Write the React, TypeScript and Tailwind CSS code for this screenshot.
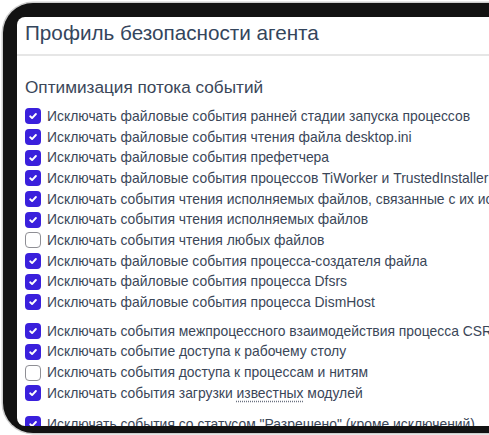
import React from 'react';

interface Option {
  label: React.ReactNode;
  checked: boolean;
}

const groups: Option[][] = [
  [
    { label: 'Исключать файловые события ранней стадии запуска процессов', checked: true },
    { label: 'Исключать файловые события чтения файла desktop.ini', checked: true },
    { label: 'Исключать файловые события префетчера', checked: true },
    { label: 'Исключать файловые события процессов TiWorker и TrustedInstaller', checked: true },
    { label: 'Исключать события чтения исполняемых файлов, связанные с их исполнением', checked: true },
    { label: 'Исключать события чтения исполняемых файлов', checked: true },
    { label: 'Исключать события чтения любых файлов', checked: false },
    { label: 'Исключать файловые события процесса-создателя файла', checked: true },
    { label: 'Исключать файловые события процесса Dfsrs', checked: true },
    { label: 'Исключать файловые события процесса DismHost', checked: true },
  ],
  [
    { label: 'Исключать события межпроцессного взаимодействия процесса CSRSS', checked: true },
    { label: 'Исключать событие доступа к рабочему столу', checked: true },
    { label: 'Исключать события доступа к процессам и нитям', checked: false },
    {
      label: (
        <>
          Исключать события загрузки{' '}
          <span className="underline decoration-dotted decoration-[#6b7280] underline-offset-[3px]">известных</span>{' '}
          модулей
        </>
      ),
      checked: true,
    },
  ],
  [{ label: 'Исключать события со статусом "Разрешено" (кроме исключений)', checked: true }],
];

const Checkbox = ({ checked }: { checked: boolean }) =>
  checked ? (
    <span className="flex h-4 w-4 shrink-0 items-center justify-center rounded-[4px] bg-[#3a20dc]">
      <svg width="10" height="10" viewBox="0 0 10 10" fill="none">
        <path d="M2.2 5.3 4.1 7.1 7.9 3" stroke="#fff" strokeWidth="1.9" strokeLinecap="round" strokeLinejoin="round" />
      </svg>
    </span>
  ) : (
    <span className="h-4 w-4 shrink-0 rounded-[4px] border border-[#8f8f95] bg-white" />
  );

export default function App() {
  return (
    <div className="h-[435px] w-[489px] overflow-hidden bg-white" style={{ fontFamily: '"Liberation Sans", Arial, sans-serif' }}>
      <div className="ml-[3px] mt-[3px] h-[430px] w-[620px] rounded-[30px] bg-[#121212] pb-[7px] pl-[14px] pt-[14px] shadow-[0_0_0_1.5px_#cdcdcd]">
        <div className="h-full overflow-hidden rounded-l-[8px] bg-white">
          <div className="h-[39px] border-b-2 border-[#e6e6e6] px-2 pt-[4px] text-[20.7px] leading-[24px] text-[#34455c]">
            Профиль безопасности агента
          </div>
          <div className="px-2 pt-[21px] text-[#3a4658]">
            <div className="mb-[7px] flex h-[22px] items-center text-[17.2px]">Оптимизация потока событий</div>
            <div className="flex flex-col gap-[8.3px]">
              {groups.map((group, gi) => (
                <div key={gi} className={gi === 2 ? 'mt-[2px] flex flex-col' : 'flex flex-col'}>
                  {group.map((opt, i) => (
                    <label key={i} className="flex h-[20.67px] items-center gap-[6px] whitespace-nowrap text-[13.9px]">
                      <Checkbox checked={opt.checked} />
                      <span>{opt.label}</span>
                    </label>
                  ))}
                </div>
              ))}
            </div>
          </div>
        </div>
      </div>
    </div>
  );
}
